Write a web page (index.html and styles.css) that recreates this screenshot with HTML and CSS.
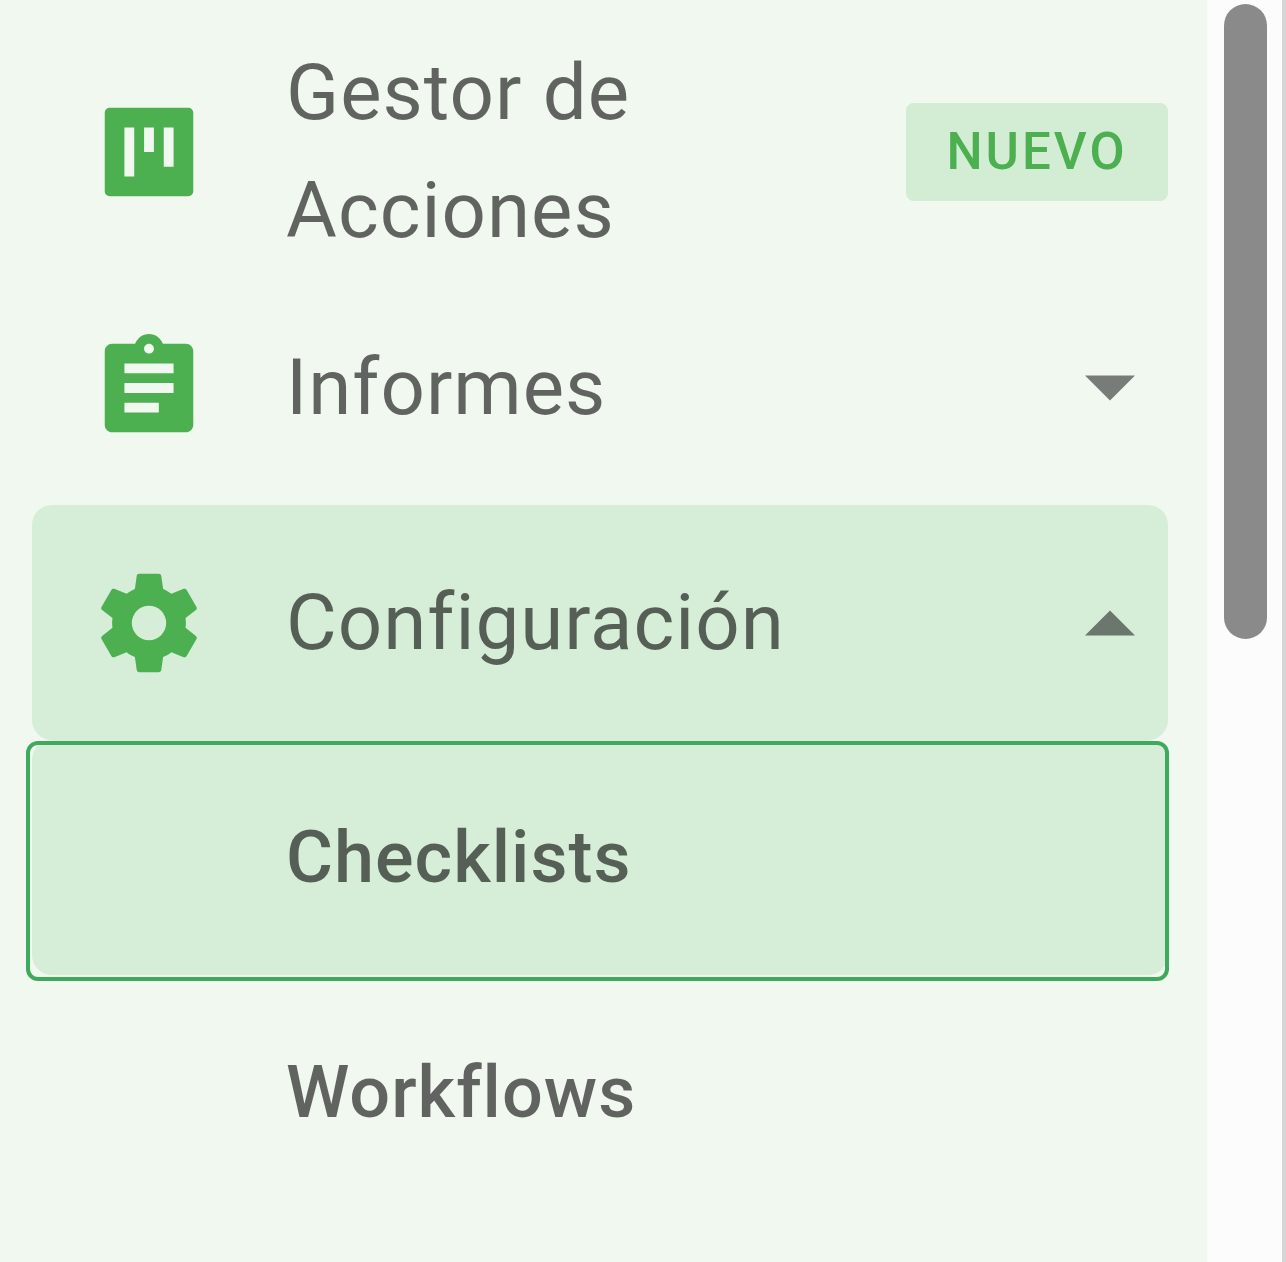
FILE: index.html
```html
<!DOCTYPE html>
<html lang="es">
<head>
  <meta charset="UTF-8" />
  <meta name="viewport" content="width=device-width, initial-scale=1.0" />
  <title>Configuración - Checklists</title>
  <link rel="stylesheet" href="styles.css">
</head>
<body>
  <nav class="sidebar">
    <a class="item" href="#acciones">
      <svg class="icon" viewBox="0 0 24 24" aria-hidden="true"><path fill-rule="evenodd" d="M4 3h16a1 1 0 0 1 1 1v16a1 1 0 0 1-1 1H4a1 1 0 0 1-1-1V4a1 1 0 0 1 1-1zM7 7v10h2V7zM11 7v5h2V7zM15 7v8h2V7z"/></svg>
      <span class="label">Gestor de Acciones</span>
      <span class="badge">NUEVO</span>
    </a>
    <button class="item" type="button" aria-expanded="false">
      <svg class="icon" viewBox="0 0 24 24" aria-hidden="true"><path d="M19.500 3h-4.680C14.400 1.840 13.300 1 12 1s-2.400.84-2.820 2H4.500C3.700 3 3 3.700 3 4.500v15c0 .8.700 1.500 1.500 1.500h15c.8 0 1.500-.7 1.500-1.500v-15c0-.8-.7-1.500-1.500-1.500zM12 3c.55 0 1 .45 1 1s-.45 1-1 1-1-.45-1-1 .45-1 1-1zm2 14H7v-2h7v2zm3-4H7v-2h10v2zm0-4H7V7h10v2z"/></svg>
      <span class="label">Informes</span>
      <svg class="caret" viewBox="0 0 10 5" aria-hidden="true"><path d="M0 0h10L5 5z"/></svg>
    </button>
    <button class="item active" type="button" aria-expanded="true">
      <svg class="icon" viewBox="0 0 24 24" aria-hidden="true"><path d="M12 15.500A3.500 3.500 0 0 1 8.500 12 3.500 3.500 0 0 1 12 8.500a3.500 3.500 0 0 1 3.500 3.500 3.500 3.500 0 0 1-3.500 3.500m7.430-2.530c.04-.32.07-.64.07-.97s-.03-.66-.07-1l2.110-1.630c.19-.15.24-.42.12-.64l-2-3.460c-.12-.22-.39-.31-.61-.22l-2.490 1c-.52-.39-1.060-.73-1.690-.98l-.37-2.650A.506.506 0 0 0 14 2h-4c-.25 0-.46.18-.5.42l-.37 2.650c-.63.25-1.170.59-1.690.98l-2.490-1c-.22-.09-.49 0-.61.22l-2 3.460c-.13.22-.07.49.12.64L4.570 11c-.04.34-.07.67-.07 1s.03.65.07.97l-2.110 1.660c-.19.15-.25.42-.12.64l2 3.460c.12.22.39.3.61.22l2.490-1.010c.52.4 1.060.74 1.690.99l.37 2.650c.04.24.25.42.5.42h4c.25 0 .46-.18.5-.42l.37-2.650c.63-.26 1.170-.59 1.690-.99l2.490 1.010c.22.08.49 0 .61-.22l2-3.460c.12-.22.07-.49-.12-.64z"/></svg>
      <span class="label">Configuración</span>
      <svg class="caret" viewBox="0 0 10 5" aria-hidden="true"><path d="M0 5h10L5 0z"/></svg>
    </button>
    <a class="item sub active selected" href="#checklists"><span class="label">Checklists</span></a>
    <a class="item sub" href="#workflows"><span class="label">Workflows</span></a>
  </nav>
  <div class="track"><div class="thumb"></div></div>
</body>
</html>
```

FILE: styles.css
```css
* {
  box-sizing: border-box;
}
body {
  margin: 0;
  min-height: 100vh;
  display: flex;
  font-family: Roboto, "Liberation Sans", sans-serif;
  background: #f1f8f0;
}
.sidebar {
  flex: 1;
  padding: 34px 39px 0 32px;
}
.item {
  position: relative;
  display: flex;
  align-items: center;
  width: 100%;
  min-height: 235px;
  padding: 0 0 0 58px;
  border: none;
  border-radius: 20px;
  background: none;
  color: rgba(0,0,0,0.6);
  font-family: inherit;
  font-size: 78px;
  line-height: 118px;
  letter-spacing: 1px;
  text-align: left;
  text-decoration: none;
  cursor: pointer;
}
.item.active {
  background: #d6edd8;
}
.icon {
  flex: none;
  width: 118px;
  height: 118px;
  margin-right: 78px;
  fill: #4caf50;
}
.label {
  flex: 1;
}
.badge {
  width: 262px;
  margin-left: 78px;
  border-radius: 8px;
  background: #d3ecd4;
  color: #4caf50;
  font-size: 51px;
  font-weight: 500;
  line-height: 98px;
  letter-spacing: 3px;
  text-align: center;
}
.caret {
  width: 50px;
  height: 26px;
  margin-right: 33px;
  fill: rgba(0,0,0,0.5);
}
.item.sub {
  padding-left: 254px;
  font-size: 72px;
  font-weight: 500;
}
/* focus ring, runs slightly past the row */
.selected::after {
  content: "";
  position: absolute;
  inset: 1px -1px -6px -6px;
  border: 4px solid #3daa5c;
  border-radius: 12px;
}
.track {
  width: 79px;
  padding: 4px 0 0 17px;
  background: #fcfcfc;
  border-right: 4px solid #d6d6d6;
}
.thumb {
  width: 43px;
  height: 635px;
  border-radius: 22px;
  background: #8a8a8a;
}
```
